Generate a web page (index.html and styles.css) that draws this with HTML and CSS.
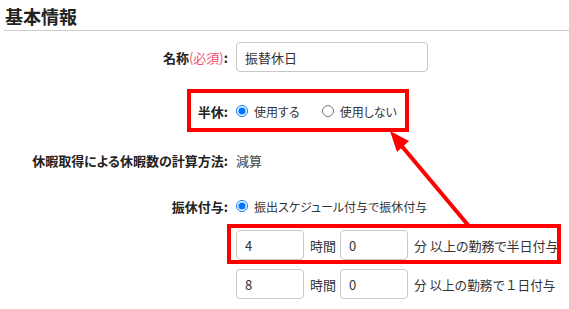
FILE: index.html
```html
<!DOCTYPE html>
<html lang="ja">
<head>
    <meta charset="UTF-8">
    <title>基本情報</title>
    <link rel="stylesheet" href="styles.css">
</head>
<body>
    <div class="page">
        <h2 class="section-title">基本情報</h2>

        <div class="row row-name">
            <label class="label">名称<span class="required">(必須)</span>:</label>
            <div class="value"><input type="text" class="text-input name-input" value="振替休日"></div>
        </div>

        <div class="row row-half">
            <label class="label">半休:</label>
            <div class="value">
                <label class="radio"><input type="radio" name="half" checked>使用する</label>
                <label class="radio"><input type="radio" name="half">使用しない</label>
            </div>
        </div>

        <div class="row row-calc">
            <label class="label">休暇取得による休暇数の計算方法:</label>
            <div class="value plain">減算</div>
        </div>

        <div class="row row-grant">
            <label class="label">振休付与:</label>
            <div class="value">
                <label class="radio"><input type="radio" name="grant" checked>振出スケジュール付与で振休付与</label>
            </div>
        </div>

        <div class="row row-sub">
            <div></div>
            <div class="value">
                <input type="text" class="text-input num-input" value="4">
                <span class="unit">時間</span>
                <input type="text" class="text-input num-input" value="0">
                <span class="unit">分 以上の勤務で半日付与</span>
            </div>
        </div>

        <div class="row row-sub">
            <div></div>
            <div class="value">
                <input type="text" class="text-input num-input" value="8">
                <span class="unit">時間</span>
                <input type="text" class="text-input num-input" value="0">
                <span class="unit full">分 以上の勤務で１日付与</span>
            </div>
        </div>

        <!-- 注釈 (赤枠と矢印) -->
        <svg class="annotation" width="569" height="309" viewBox="0 0 569 309">
            <rect x="189" y="91" width="218" height="39" fill="none" stroke="#ff0000" stroke-width="4"/>
            <rect x="229" y="226" width="330" height="36" fill="none" stroke="#ff0000" stroke-width="4"/>
            <line x1="468" y1="225" x2="400" y2="144" stroke="#ff0000" stroke-width="4"/>
            <polygon points="390,131 397,152 409,141" fill="#ff0000"/>
        </svg>
    </div>
</body>
</html>
```

FILE: styles.css
```css
* {
    margin: 0;
    padding: 0;
    box-sizing: border-box;
}

body {
    font-family: "Noto Sans CJK JP", "Noto Sans", sans-serif;
    font-size: 13px;
    font-feature-settings: "palt";
    color: #333;
    background: #fff;
    width: 569px;
    height: 309px;
    overflow: hidden;
}

.page {
    position: relative;
    height: 309px;
}

.section-title {
    margin-left: 4px;
    padding: 4px 0 2px 1px;
    font-size: 18px;
    line-height: 24px;
    font-weight: bold;
    color: #222;
    border-bottom: 1px solid #ccc;
}

.row {
    display: grid;
    grid-template-columns: 228px 1fr;
    column-gap: 8px;
    align-items: center;
    min-height: 30px;
}

.row-name { margin-top: 11px; }
.row-half { margin-top: 24px; }
.row-calc { margin-top: 19px; }
.row-grant { margin-top: 16px; }
.row-sub { margin-top: 9px; }

.label {
    text-align: right;
    font-weight: bold;
    color: #222;
    white-space: nowrap;
}

.required {
    font-weight: normal;
    color: #f0506e;
}

.value {
    display: flex;
    align-items: center;
    white-space: nowrap;
}

.value.plain {
    color: #444;
}

.text-input {
    height: 30px;
    border: 1px solid #c8c8c8;
    border-radius: 4px;
    padding: 0 8px;
    font-family: inherit;
    font-size: 13px;
    font-feature-settings: "palt";
    color: #333;
    background: #fff;
}

.name-input {
    width: 192px;
}

.num-input {
    width: 68px;
}

.unit {
    margin: 0 4px 0 6px;
}

.unit.full {
    font-feature-settings: normal;
    font-size: 12.6px;
}

.radio {
    display: inline-flex;
    align-items: center;
    margin-right: 22px;
    font-size: 12px;
}

.radio input {
    width: 12px;
    height: 12px;
    margin: 0 6px 0 0;
}

.annotation {
    position: absolute;
    left: 0;
    top: 0;
    pointer-events: none;
}
```
